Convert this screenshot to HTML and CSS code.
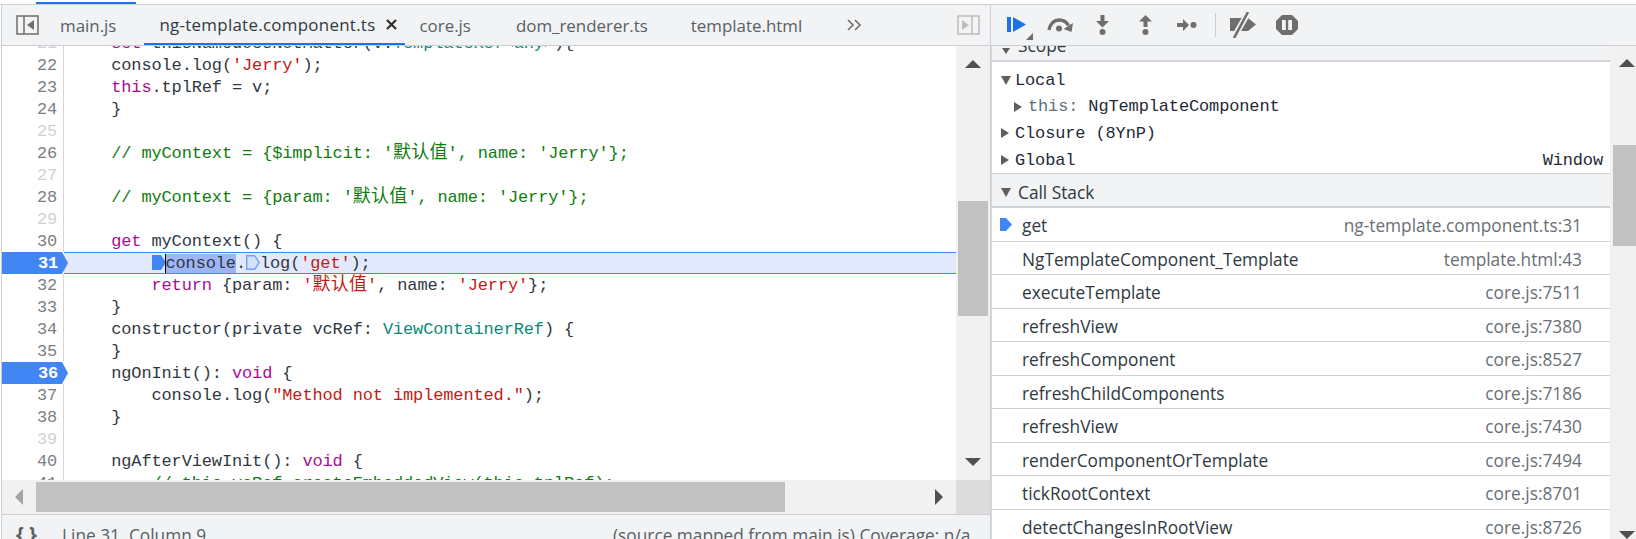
FILE: index.html
```html
<!DOCTYPE html>
<html lang="en">
<head>
  <meta charset="UTF-8" />
  <title>Sources</title>
  <link rel="stylesheet" href="styles.css">
</head>
<body>
  <div class="top-strip"><div class="top-tab"></div></div>
  <div class="main">
    <!-- Editor side -->
    <div class="sources">
      <div class="tabbar">
        <div class="pane-toggle">
          <svg width="23" height="20" viewBox="0 0 23 20"><rect x="1" y="1" width="21" height="18" fill="none" stroke="#6e6e6e" stroke-width="1.5"/><path d="M8 1v18" stroke="#6e6e6e" stroke-width="1.5"/><path d="M18 5v10l-7-5z" fill="#6e6e6e"/></svg>
        </div>
        <div class="tab tight">main.js</div>
        <div class="tab active">ng-template.component.ts<span class="close"><svg width="11" height="11" viewBox="0 0 11 11"><path d="M1 1l9 9M10 1l-9 9" stroke="#303030" stroke-width="2.200"/></svg></span></div>
        <div class="tab">core.js</div>
        <div class="tab tight">dom_renderer.ts</div>
        <div class="tab">template.html</div>
        <svg class="more" width="15" height="12" viewBox="0 0 15 12"><path d="M1 1l5 5-5 5M8 1l5 5-5 5" fill="none" stroke="#6e6e6e" stroke-width="1.6"/></svg>
        <div class="pane-toggle-right">
          <svg width="23" height="20" viewBox="0 0 23 20"><rect x="1" y="1" width="21" height="18" fill="none" stroke="#bdbdbd" stroke-width="1.5"/><path d="M15 1v18" stroke="#bdbdbd" stroke-width="1.5"/><path d="M5 5v10l7-5z" fill="#bdbdbd"/></svg>
        </div>
      </div>

      <div class="editor">
        <div class="code-view">
          <div class="line"><span class="ln dim">21</span><span class="code">    <i class="kw">set</i> thisNamedoesNotMatter(v:<i class="ty">TemplateRef</i>&lt;<i class="ty">any</i>&gt;){</span></div>
          <div class="line"><span class="ln">22</span><span class="code">    console.log(<i class="str">'Jerry'</i>);</span></div>
          <div class="line"><span class="ln">23</span><span class="code">    <i class="kw">this</i>.tplRef = v;</span></div>
          <div class="line"><span class="ln">24</span><span class="code">    }</span></div>
          <div class="line"><span class="ln dim">25</span><span class="code"></span></div>
          <div class="line"><span class="ln">26</span><span class="code com">    // myContext = {$implicit: '<b class="cjk">默认值</b>', name: 'Jerry'};</span></div>
          <div class="line"><span class="ln dim">27</span><span class="code"></span></div>
          <div class="line"><span class="ln">28</span><span class="code com">    // myContext = {param: '<b class="cjk">默认值</b>', name: 'Jerry'};</span></div>
          <div class="line"><span class="ln dim">29</span><span class="code"></span></div>
          <div class="line"><span class="ln">30</span><span class="code">    <i class="kw">get</i> myContext() {</span></div>
          <div class="line current"><span class="ln bp">31</span><span class="code">        <svg class="mark" width="14" height="15" viewBox="0 0 14 15"><path d="M0 0h9l5 7.500-5 7.500H0z" fill="#4285f4"/></svg><span class="sel">console</span>.<svg class="mark" width="14" height="15" viewBox="0 0 14 15"><path d="M.7.7h8l4.500 6.800-4.500 6.800h-8z" fill="#d5e2fb" stroke="#6fa1f6" stroke-width="1.400"/></svg>log(<i class="str">'get'</i>);</span></div>
          <div class="line"><span class="ln">32</span><span class="code">        <i class="kw">return</i> {param: <i class="str">'<b class="cjk">默认值</b>'</i>, name: <i class="str">'Jerry'</i>};</span></div>
          <div class="line"><span class="ln">33</span><span class="code">    }</span></div>
          <div class="line"><span class="ln">34</span><span class="code">    constructor(private vcRef: <i class="ty">ViewContainerRef</i>) {</span></div>
          <div class="line"><span class="ln">35</span><span class="code">    }</span></div>
          <div class="line"><span class="ln bp">36</span><span class="code">    ngOnInit(): <i class="kw">void</i> {</span></div>
          <div class="line"><span class="ln">37</span><span class="code">        console.log(<i class="str">"Method not implemented."</i>);</span></div>
          <div class="line"><span class="ln">38</span><span class="code">    }</span></div>
          <div class="line"><span class="ln dim">39</span><span class="code"></span></div>
          <div class="line"><span class="ln">40</span><span class="code">    ngAfterViewInit(): <i class="kw">void</i> {</span></div>
          <div class="line"><span class="ln">41</span><span class="code com">        // this.vcRef.createEmbeddedView(this.tplRef);</span></div>
        </div>
        <div class="vscroll">
          <svg class="arrow" width="16" height="8" viewBox="0 0 16 8"><path d="M8 0l8 8H0z" fill="#505050"/></svg>
          <div class="vthumb"></div>
          <svg class="arrow arrow-down" width="16" height="8" viewBox="0 0 16 8"><path d="M0 0h16l-8 8z" fill="#505050"/></svg>
        </div>
      </div>

      <div class="hscroll">
        <div class="hbtn"><svg width="8" height="16" viewBox="0 0 8 16"><path d="M8 0v16L0 8z" fill="#a3a3a3"/></svg></div>
        <div class="hthumb"></div>
        <div class="hbtn hbtn-right"><svg width="8" height="16" viewBox="0 0 8 16"><path d="M0 0l8 8-8 8z" fill="#505050"/></svg></div>
        <div class="corner"></div>
      </div>

      <div class="statusbar">
        <span class="braces">{ }</span>
        <span class="pos">Line 31, Column 9</span>
        <span class="mapped">(source mapped from main.js) Coverage: n/a</span>
      </div>
    </div>

    <!-- Debugger sidebar -->
    <div class="sidebar">
      <div class="dbg-toolbar">
        <svg class="ic-resume" width="26" height="26" viewBox="0 0 26 26"><path d="M0 3h4v15H0zM6 3l13 7.500L6 18z" fill="#1a73e8"/><path d="M26 19v7h-7z" fill="#6e6e6e"/></svg>
        <svg class="ic-over" width="26" height="14" viewBox="0 0 26 14"><path d="M2 12C3 6 7 2 12.500 2c4 0 7 2 9 5.500" fill="none" stroke="#6e6e6e" stroke-width="3.400"/><path d="M26 5l-1.500 9-8-3z" fill="#6e6e6e"/><circle cx="12" cy="10.500" r="3" fill="#6e6e6e"/></svg>
        <svg class="ic-into" width="15" height="20" viewBox="0 0 15 20"><path d="M5.500 0h4v6H14l-6.500 6.500L1 6h4.500z" fill="#6e6e6e"/><circle cx="7.500" cy="17" r="3" fill="#6e6e6e"/></svg>
        <svg class="ic-out" width="15" height="20" viewBox="0 0 15 20"><path d="M7.500 0L14 6.500H9.500V12h-4V6.500H1z" fill="#6e6e6e"/><circle cx="7.500" cy="17" r="3" fill="#6e6e6e"/></svg>
        <svg class="ic-step" width="20" height="12" viewBox="0 0 20 12"><path d="M0 4h6V0l6 6-6 6V8H0z" fill="#6e6e6e"/><circle cx="16.500" cy="6" r="3" fill="#6e6e6e"/></svg>
        <div class="tb-sep"></div>
        <svg class="ic-deact" width="28" height="26" viewBox="0 0 28 26"><path d="M1 6h18l8 6.500-8 6.500H1z" fill="#6e6e6e"/><path d="M4 27L20-1" stroke="#f1f3f4" stroke-width="6"/><path d="M5 26L19 0" stroke="#6e6e6e" stroke-width="2.600"/></svg>
        <svg class="ic-pause" width="22" height="20" viewBox="0 0 22 20"><path d="M6 0h10l6 6v8l-6 6H6l-6-6V6z" fill="#6e6e6e"/><path d="M6 5h3.800v10H6zM12.200 5H16v10h-3.800z" fill="#f1f3f4"/></svg>
      </div>

      <div class="sidebar-body">
        <div class="panes">
          <div class="scope-head"><span class="tri-down small"></span><span class="head-text">Scope</span></div>
          <div class="scope-list">
            <div class="scope-row"><span class="tri-down"></span>Local</div>
            <div class="scope-row nested"><span class="tri-right"></span><span class="prop">this:</span> NgTemplateComponent</div>
            <div class="scope-row"><span class="tri-right"></span>Closure (8YnP)</div>
            <div class="scope-row"><span class="tri-right"></span>Global<span class="scope-val">Window</span></div>
          </div>
          <div class="stack-head"><span class="tri-down"></span><span class="head-text">Call Stack</span></div>
          <div class="frame">
            <svg class="frame-ic" width="12" height="15" viewBox="0 0 12 15"><path d="M0 1h6l6 6.500L6 14H0z" fill="#4285f4"/></svg>
            <span>get</span><span class="loc">ng-template.component.ts:31</span>
          </div>
          <div class="frame"><span>NgTemplateComponent_Template</span><span class="loc">template.html:43</span></div>
          <div class="frame"><span>executeTemplate</span><span class="loc">core.js:7511</span></div>
          <div class="frame"><span>refreshView</span><span class="loc">core.js:7380</span></div>
          <div class="frame"><span>refreshComponent</span><span class="loc">core.js:8527</span></div>
          <div class="frame"><span>refreshChildComponents</span><span class="loc">core.js:7186</span></div>
          <div class="frame"><span>refreshView</span><span class="loc">core.js:7430</span></div>
          <div class="frame"><span>renderComponentOrTemplate</span><span class="loc">core.js:7494</span></div>
          <div class="frame"><span>tickRootContext</span><span class="loc">core.js:8701</span></div>
          <div class="frame"><span>detectChangesInRootView</span><span class="loc">core.js:8726</span></div>
        </div>
        <div class="side-scroll">
          <svg class="arrow" width="16" height="8" viewBox="0 0 16 8"><path d="M8 0l8 8H0z" fill="#505050"/></svg>
          <div class="side-thumb"></div>
          <svg class="arrow side-down" width="16" height="8" viewBox="0 0 16 8"><path d="M0 0h16l-8 8z" fill="#505050"/></svg>
        </div>
      </div>
    </div>
  </div>
</body>
</html>
```

FILE: styles.css
```css
* { box-sizing: border-box; }
html, body { height: 100%; }
body {
  margin: 0;
  height: 539px;
  overflow: hidden;
  background: #fff;
  font-family: "Open Sans", "Noto Sans", sans-serif;
  font-size: 17.3px;
  color: #303942;
}

.top-strip {
  height: 5px;
  border-bottom: 1px solid #cdcfd2;
  padding: 2px 0 0 36px;
}
.top-tab {
  width: 100px;
  height: 2px;
  background: #1a73e8;
}

.main {
  display: flex;
  height: 534px;
}

.sources {
  width: 990px;
  margin-left: 1px;
  border-left: 1px solid #cdcfd2;
  border-right: 1px solid #cdcfd2;
  display: flex;
  flex-direction: column;
  flex: none;
}

/* tabs */
.tabbar {
  height: 41px;
  flex: none;
  display: flex;
  align-items: center;
  background: #f1f3f4;
  border-bottom: 1px solid #cdcfd2;
  color: #5a5f64;
}
.pane-toggle {
  width: 43px;
  padding-left: 14px;
  display: flex;
}
.tab {
  height: 40px;
  line-height: 41px;
  padding: 0 30px 0 15px;
  font-size: 16.9px;
  white-space: nowrap;
}
.tab.tight { padding-right: 28px; }
.tab.active {
  padding: 1px 8px 0 15px;
  border-bottom: 2px solid #1a73e8;
  color: #303942;
  letter-spacing: 0.29px;
  display: flex;
  align-items: center;
}
.close {
  width: 21px;
  display: flex;
  justify-content: flex-end;
}
.more { margin-left: 15px; }
.pane-toggle-right {
  margin-left: auto;
  width: 33px;
  display: flex;
}

/* code */
.editor {
  height: 434px;
  flex: none;
  display: flex;
  overflow: hidden;
}
.code-view {
  flex: 1;
  min-width: 0;
  overflow: hidden;
  font-family: "Liberation Mono", "Noto Sans CJK SC", monospace;
  font-size: 17px;
  letter-spacing: -0.14px;
  color: #303942;
}
.line {
  display: flex;
  height: 22px;
  line-height: 24px;
  white-space: pre;
}
.line:first-child { margin-top: -14px; }
.ln {
  width: 62px;
  flex: none;
  padding-right: 6px;
  text-align: right;
  color: #7a7f85;
  border-right: 1px solid #d4d6d9;
}
.ln.dim { color: #cfd1d4; }
.ln.bp {
  color: #fff;
  font-weight: bold;
  background: #4285f4;
  width: 66px;
  margin-right: -4px;
  padding-right: 10px;
  border-right: 0;
  position: relative;
  z-index: 1;
  clip-path: polygon(0 0, 60px 0, 100% 50%, 60px 100%, 0 100%);
}
.code {
  padding-left: 7px;
  flex: 1;
}
.code i { font-style: normal; }
.kw { color: #aa0d91; }
.str { color: #c41a16; }
.ty { color: #0b8a78; }
.com { color: #107c10; }
.cjk {
  font-family: "Noto Sans CJK SC", sans-serif;
  font-weight: normal;
  font-size: 18px;
  line-height: 0;
  letter-spacing: 0.2px;
}
.current .code {
  background: #e2e9fc;
  box-shadow: inset 0 1px 0 #4285f4, inset 0 -1px 0 #4285f4;
}
.sel {
  background: #9db4f5;
  box-shadow: -1px 0 0 #000;
}
.mark {
  vertical-align: -2px;
}

/* scrollbars */
.vscroll {
  width: 34px;
  flex: none;
  display: flex;
  flex-direction: column;
  align-items: center;
  padding: 14px 0;
  background: #f1f1f1;
}
.arrow { flex: none; display: block; }
.vthumb {
  width: 30px;
  height: 115px;
  margin-top: 133px;
  background: #c1c1c1;
}
.arrow-down { margin-top: auto; }

.hscroll {
  height: 34px;
  flex: none;
  display: flex;
  background: #f1f1f1;
}
.hbtn {
  width: 34px;
  display: flex;
  align-items: center;
  padding-left: 13px;
}
.hbtn-right {
  margin-left: auto;
  width: 21px;
  padding-left: 0;
}
.hthumb {
  width: 749px;
  height: 30px;
  margin-top: 2px;
  background: #c1c1c1;
}
.corner {
  width: 34px;
  background: #dcdcdc;
}

.statusbar {
  flex: 1;
  min-height: 0;
  overflow: hidden;
  display: flex;
  background: #f1f3f4;
  border-top: 1px solid #cdcfd2;
  color: #5a5f64;
  line-height: 22px;
  padding-top: 10px;
}
.braces {
  width: 60px;
  margin-top: -2px;
  padding-left: 14px;
  font-weight: bold;
  font-size: 20px;
  color: #5a5f64;
  letter-spacing: 0;
}
.pos { width: 551px; }

/* debugger */
.sidebar {
  flex: 1;
  min-width: 0;
  display: flex;
  flex-direction: column;
}
.dbg-toolbar {
  height: 41px;
  flex: none;
  display: flex;
  align-items: center;
  background: #f1f3f4;
  border-bottom: 1px solid #cdcfd2;
}
.dbg-toolbar svg { flex: none; display: block; }
.ic-resume { margin: 4px 0 0 16px; }
.ic-over { margin-left: 14px; }
.ic-into { margin-left: 22px; }
.ic-out { margin-left: 28px; }
.ic-step { margin-left: 24px; }
.tb-sep {
  width: 1px;
  height: 24px;
  margin-left: 18px;
  background: #cdcfd2;
}
.ic-deact { margin-left: 13px; }
.ic-pause { margin-left: 19px; }

.sidebar-body {
  flex: 1;
  min-height: 0;
  display: flex;
  overflow: hidden;
}
.panes {
  flex: 1;
  min-width: 0;
  border-left: 1px solid #d8dadd;
  overflow: hidden;
}
.scope-head {
  height: 16px;
  overflow: hidden;
  background: #f1f3f4;
  border-bottom: 2px solid #d0d2d5;
  display: flex;
  align-items: center;
  padding-left: 10px;
}
.scope-head .tri-down { margin-top: -4px; }
.scope-head .head-text {
  line-height: 14px;
  margin-top: -14px;
  margin-left: 8px;
}
.head-text { margin-left: 3px; }

.tri-down, .tri-right {
  display: inline-block;
  width: 0;
  height: 0;
  flex: none;
}
.tri-down {
  border-left: 5px solid transparent;
  border-right: 5px solid transparent;
  border-top: 9px solid #5f5f5f;
  margin-right: 4px;
}
.tri-down.small {
  border-left-width: 4px;
  border-right-width: 4px;
  border-top-width: 6px;
  margin-right: 0;
}
.tri-right {
  border-top: 5px solid transparent;
  border-bottom: 5px solid transparent;
  border-left: 8px solid #5f5f5f;
  margin-right: 6px;
}

.scope-list {
  padding-top: 4px;
  height: 112px;
  border-bottom: 1px solid #d0d2d5;
  font-family: "Liberation Mono", monospace;
  font-size: 17px;
  letter-spacing: -0.14px;
  color: #1f2a36;
}
.scope-row {
  height: 26.6px;
  display: flex;
  align-items: center;
  padding: 2px 0 0 9px;
  white-space: pre;
}
.scope-row.nested { padding-left: 22px; }
.prop { color: #5f6f80; }
.scope-val {
  margin-left: auto;
  margin-right: 7px;
}

.stack-head {
  height: 34px;
  padding: 4px 0 0 9px;
  display: flex;
  align-items: center;
  background: #f1f3f4;
  border-bottom: 2px solid #d0d2d5;
}
.frame {
  height: 33.5px;
  display: flex;
  align-items: center;
  justify-content: space-between;
  padding: 3px 28px 0 30px;
  border-bottom: 1px solid #d0d2d5;
  position: relative;
}
.frame-ic {
  position: absolute;
  left: 8px;
  top: 9px;
}
.loc { color: #6a6f75; }

.side-scroll {
  width: 26px;
  flex: none;
  display: flex;
  flex-direction: column;
  align-items: flex-end;
  padding-top: 13px;
  background: #f1f1f1;
  overflow: hidden;
}
.side-scroll .arrow { margin-right: 1px; }
.side-thumb {
  width: 23px;
  height: 103px;
  margin-top: 78px;
  background: #c1c1c1;
}
.side-scroll .side-down { margin-top: 285px; }
```
